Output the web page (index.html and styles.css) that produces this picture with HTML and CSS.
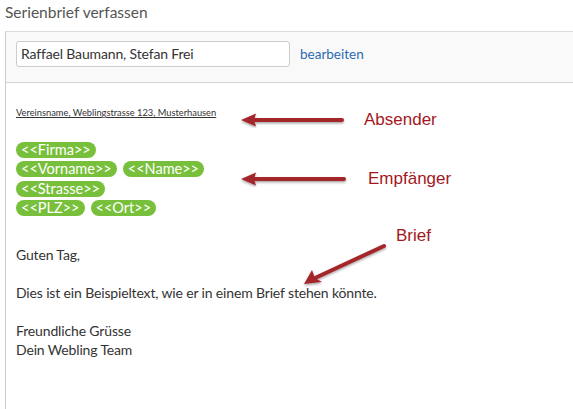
FILE: index.html
```html
<!DOCTYPE html>
<html lang="de">
<head>
<meta charset="utf-8">
<title>Serienbrief verfassen</title>
<link rel="stylesheet" href="styles.css">
</head>
<body>
<div class="page">
  <h1 class="title">Serienbrief verfassen</h1>
  <div class="panel">
    <div class="panel-head">
      <div class="recipients">Raffael Baumann, Stefan Frei</div>
      <a class="edit" href="#">bearbeiten</a>
    </div>
    <div class="letter">
      <div class="sender">Vereinsname, Weblingstrasse 123, Musterhausen</div>
      <div class="tags">
        <div class="tag-row"><span class="tag">&lt;&lt;Firma&gt;&gt;</span></div>
        <div class="tag-row"><span class="tag">&lt;&lt;Vorname&gt;&gt;</span><span class="tag">&lt;&lt;Name&gt;&gt;</span></div>
        <div class="tag-row"><span class="tag">&lt;&lt;Strasse&gt;&gt;</span></div>
        <div class="tag-row"><span class="tag">&lt;&lt;PLZ&gt;&gt;</span><span class="tag">&lt;&lt;Ort&gt;&gt;</span></div>
      </div>
      <div class="body-text">
        <p>Guten Tag,</p>
        <p>Dies ist ein Beispieltext, wie er in einem Brief stehen könnte.</p>
        <p>Freundliche Grüsse<br>Dein Webling Team</p>
      </div>
    </div>
  </div>
</div>

<div class="note note-sender">
  <svg class="arrow" width="112" height="16" viewBox="0 0 112 16"><defs><filter id="sh1" x="-10%" y="-50%" width="120%" height="200%"><feDropShadow dx="0" dy="1.5" stdDeviation="1" flood-color="#000" flood-opacity="0.35"/></filter></defs><g filter="url(#sh1)"><path d="M14 8 L102 8" stroke="#a3282b" stroke-width="4" stroke-linecap="round"/><path d="M1 8 L16 1.5 L14 8 L16 14.5 Z" fill="#a3282b"/></g></svg>
  <span class="note-label">Absender</span>
</div>
<div class="note note-recipient">
  <svg class="arrow" width="112" height="16" viewBox="0 0 112 16"><g filter="url(#sh1)"><path d="M14 8 L104 8" stroke="#a3282b" stroke-width="4" stroke-linecap="round"/><path d="M1 8 L16 1.5 L14 8 L16 14.5 Z" fill="#a3282b"/></g></svg>
  <span class="note-label">Empfänger</span>
</div>
<div class="note note-brief">
  <span class="note-label">Brief</span>
  <svg class="arrow-diag" width="90" height="50" viewBox="0 0 90 50"><g filter="url(#sh1)"><path d="M15 40 L84 8" stroke="#a3282b" stroke-width="4" stroke-linecap="round"/><path d="M4 46 L12 32 L15 40 L22 44 Z" fill="#a3282b"/></g></svg>
</div>
</body>
</html>
```
FILE: styles.css
```css
html, body {
  margin: 0;
  padding: 0;
  background: #fff;
  width: 573px;
  height: 409px;
  overflow: hidden;
  position: relative;
}
body {
  font-family: "Lato", "Open Sans", sans-serif;
  color: #333;
}
.page {
  padding: 3px 0 0 5px;
}
.title {
  margin: 0;
  font-size: 15.5px;
  font-weight: normal;
  color: #555;
  line-height: 18px;
  height: 28px;
}
.panel {
  border-left: 1px solid #ccc;
  border-top: 1px solid #ddd;
  height: 377px;
  overflow: hidden;
}
.panel-head {
  background: #f9f9f9;
  border-bottom: 1px solid #d4d4d4;
  display: flex;
  align-items: center;
  padding: 9px 10px 15px 10px;
}
.recipients {
  width: 264px;
  height: 24px;
  border: 1px solid #ccc;
  border-radius: 3px;
  background: #fff;
  font-size: 14px;
  letter-spacing: -0.15px;
  line-height: 24px;
  padding: 0 4px;
  color: #333;
}
.edit {
  margin-left: 10px;
  font-size: 13.5px;
  color: #2a6ab0;
  text-decoration: none;
}
.letter {
  padding: 24px 10px 0 10px;
}
.sender {
  font-size: 9.3px;
  text-decoration: underline;
  color: #333;
  line-height: 12px;
}
.tags {
  margin-top: 23px;
  display: flex;
  flex-direction: column;
  gap: 3.3px;
}
.tag-row {
  display: flex;
  gap: 6px;
}
.tag {
  background: #78c03c;
  color: #fff;
  font-size: 14.5px;
  line-height: 16px;
  height: 16px;
  padding: 0 5px;
  border-radius: 8px;
}
.body-text {
  margin-top: 29px;
  font-size: 14px;
  letter-spacing: -0.15px;
  line-height: 19px;
  color: #333;
}
.body-text p {
  margin: 0 0 19px 0;
}
.note {
  position: absolute;
  display: flex;
  align-items: center;
  font-family: "Liberation Sans", Arial, sans-serif;
  color: #a3181c;
  font-size: 17px;
}
.note-sender { left: 240px; top: 110px; }
.note-sender .note-label { margin-left: 12px; }
.note-recipient { left: 240px; top: 169px; }
.note-recipient .note-label { margin-left: 16px; }
.note-brief { left: 300px; top: 226px; display: block; width: 130px; height: 70px; }
.note-brief .note-label { position: absolute; left: 96px; top: 0; }
.note-brief .arrow-diag { position: absolute; left: 0; top: 12px; }
```
